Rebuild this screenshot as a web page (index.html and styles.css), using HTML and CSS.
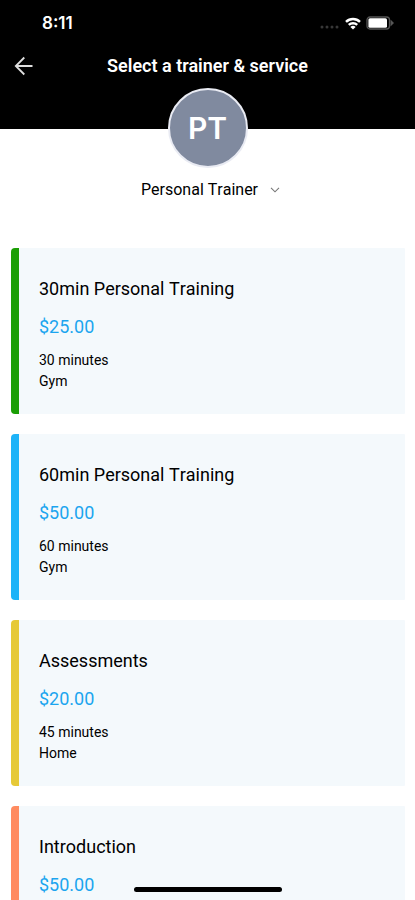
FILE: index.html
```html
<!DOCTYPE html>
<html lang="en">
<head>
<meta charset="utf-8">
<meta name="viewport" content="width=device-width, initial-scale=1">
<title>Select a trainer &amp; service</title>
<link rel="stylesheet" href="styles.css">
</head>
<body>
<header class="header">
  <div class="status">
    <span class="time">8:11</span>
    <div class="status-icons">
      <svg class="signal" width="20" height="4" viewBox="0 0 20 4" fill="#383838" aria-hidden="true"><circle cx="2" cy="2" r="1.5"/><circle cx="7" cy="2" r="1.5"/><circle cx="12" cy="2" r="1.5"/><circle cx="17" cy="2" r="1.5"/></svg>
      <svg width="16" height="13" viewBox="0 0 16 13" fill="none" stroke="#fff" stroke-width="2.4" aria-hidden="true"><path d="M1 4.8a10 10 0 0 1 14 0"/><path d="M3.8 7.9a6 6 0 0 1 8.4 0"/><path d="M8 12.6 5.4 10a3.7 3.7 0 0 1 5.2 0Z" fill="#fff" stroke="none"/></svg>
      <svg width="29" height="14" viewBox="0 0 29 14" aria-hidden="true"><rect x="1" y="1" width="22.5" height="12" rx="3" fill="none" stroke="#555" stroke-width="1.3"/><rect x="2.4" y="2.2" width="18.6" height="9.6" rx="1.6" fill="#fff"/><path d="M24.5 3.6 28 7l-3.5 3.4Z" fill="#555"/></svg>
    </div>
  </div>
  <div class="nav">
    <button class="back" type="button" aria-label="Back">
      <svg width="20" height="20" viewBox="0 0 20 20" fill="none" stroke="#dedede" stroke-width="1.8" aria-hidden="true"><path d="M18.5 10H2M10.3 1.5 1.8 10l8.5 8.5"/></svg>
    </button>
    <h1 class="title">Select a trainer &amp; service</h1>
  </div>
</header>
<section class="trainer">
  <div class="avatar">PT</div>
  <button class="picker" type="button">Personal Trainer
    <svg width="10" height="6" viewBox="0 0 10 6" fill="none" stroke="#777" stroke-width="1.1" aria-hidden="true"><path d="m1 .8 4 4 4-4"/></svg>
  </button>
</section>
<main class="services">
  <article class="card green">
    <h2 class="name">30min Personal Training</h2>
    <p class="price">$25.00</p>
    <p class="detail">30 minutes</p>
    <p class="detail">Gym</p>
  </article>
  <article class="card blue">
    <h2 class="name">60min Personal Training</h2>
    <p class="price">$50.00</p>
    <p class="detail">60 minutes</p>
    <p class="detail">Gym</p>
  </article>
  <article class="card yellow">
    <h2 class="name">Assessments</h2>
    <p class="price">$20.00</p>
    <p class="detail">45 minutes</p>
    <p class="detail">Home</p>
  </article>
  <article class="card orange">
    <h2 class="name">Introduction</h2>
    <p class="price">$50.00</p>
  </article>
</main>
<div class="home-indicator"></div>
</body>
</html>
```
FILE: styles.css
```css
* {
  box-sizing: border-box;
}

body {
  margin: 0;
  height: 100vh;
  display: flex;
  flex-direction: column;
  overflow: hidden;
  background: #fff;
  color: #000;
  font-family: Roboto, "Liberation Sans", sans-serif;
  font-kerning: none;
}

h1,
h2,
p {
  margin: 0;
}

button {
  border: 0;
  padding: 0;
  background: none;
  color: inherit;
  font: inherit;
}

.header {
  flex: none;
  height: 129px;
  padding-top: 11px;
  background: #000;
  color: #fff;
}

.status {
  display: flex;
  align-items: center;
  justify-content: space-between;
  height: 24px;
  padding: 0 20px 0 42px;
}

.time {
  font: 600 17px/24px Inter, Roboto, sans-serif;
}

.status-icons {
  display: flex;
  align-items: center;
  gap: 5px;
}

.signal {
  margin-top: 8px;
}

.nav {
  display: grid;
  grid-template-columns: 40px 1fr 40px;
  align-items: center;
  height: 62px;
}

.back {
  display: flex;
  padding-left: 14px;
}

.title {
  text-align: center;
  font-size: 18px;
  line-height: 24px;
  font-weight: 600;
  font-kerning: auto;
}

.trainer {
  flex: none;
  display: flex;
  flex-direction: column;
  align-items: center;
  gap: 11px;
  margin-top: -41px;
  padding-bottom: 47px;
}

.avatar {
  display: flex;
  align-items: center;
  justify-content: center;
  width: 80px;
  height: 80px;
  border: 2px solid #e9ebf3;
  border-radius: 50%;
  background: #808a9f;
  color: #fff;
  font: 600 30px/36px Inter, Roboto, sans-serif;
}

.picker {
  display: flex;
  align-items: center;
  gap: 12px;
  padding-left: 6px;
  font-size: 16px;
  font-kerning: none;
  line-height: 22px;
}

.services {
  flex: 1;
  min-height: 0;
  display: flex;
  flex-direction: column;
  gap: 20px;
  padding: 0 10px 0 11px;
  overflow: hidden;
}

.card {
  flex: none;
  padding: 29px 20px 22px;
  border-left: 8px solid;
  border-radius: 4px 1px 1px 4px;
  background: #f4f9fc;
}

.green { border-color: #1b9e05; }
.blue { border-color: #1db3f8; }
.yellow { border-color: #e6c938; }
.orange { border-color: #ff8b60; }

.name {
  font-size: 18px;
  line-height: 24px;
  font-weight: 400;
}

.price {
  margin: 14px 0 11px;
  color: #1ba5ef;
  font-size: 18px;
  line-height: 24px;
}

.detail {
  font-size: 14px;
  line-height: 21px;
}

.home-indicator {
  position: fixed;
  bottom: 8px;
  left: 50%;
  width: 148px;
  height: 5px;
  border-radius: 3px;
  background: #000;
  transform: translateX(-50%);
}
```
